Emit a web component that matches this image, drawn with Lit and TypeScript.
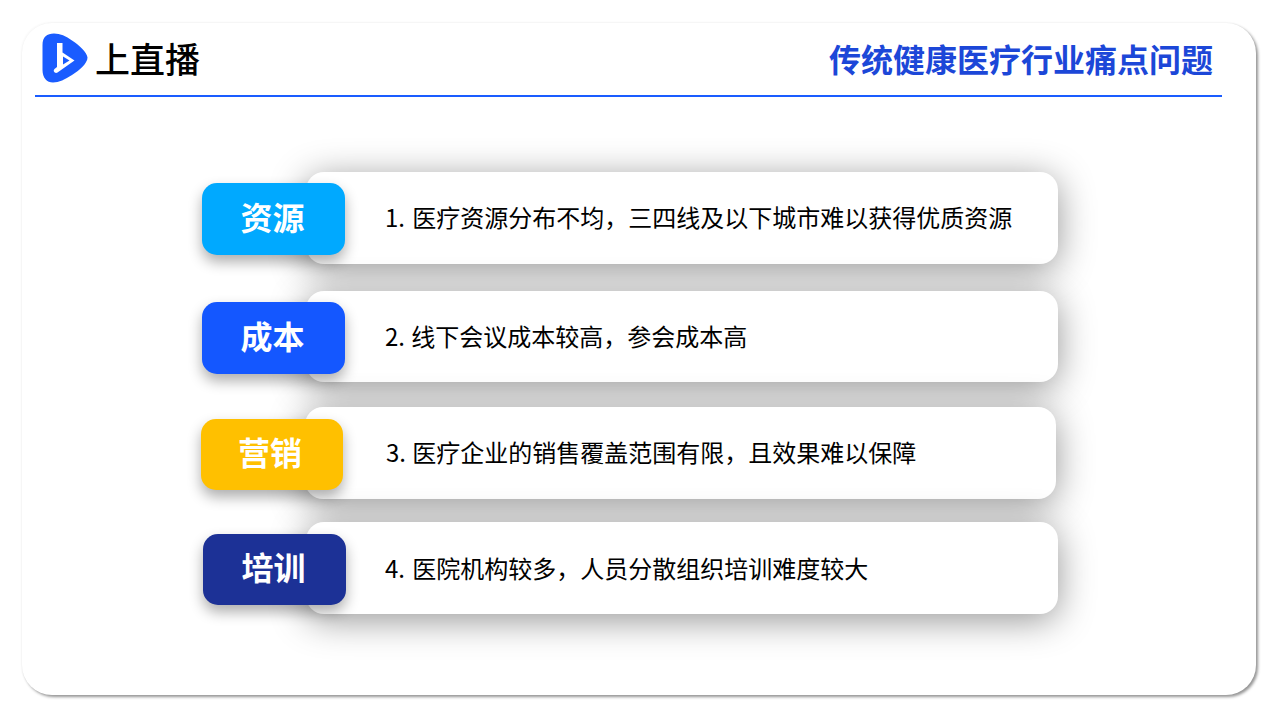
import { LitElement, html, css } from "lit";
import { customElement } from "lit/decorators.js";

const rows = [
  { tag: "资源", cls: "c1", text: "1. 医疗资源分布不均，三四线及以下城市难以获得优质资源" },
  { tag: "成本", cls: "c2", text: "2. 线下会议成本较高，参会成本高" },
  { tag: "营销", cls: "c3", text: "3. 医疗企业的销售覆盖范围有限，且效果难以保障" },
  { tag: "培训", cls: "c4", text: "4. 医院机构较多，人员分散组织培训难度较大" },
];

@customElement("app-root")
export class AppRoot extends LitElement {
  static styles = css`
    :host {
      display: block;
      width: 1278px;
      height: 720px;
      overflow: hidden;
      background: #fff;
      font-family: "Noto Sans CJK SC", "Noto Sans", sans-serif;
      padding: 23px 0 0 22px;
      box-sizing: border-box;
    }
    .slide {
      width: 1234px;
      height: 672px;
      box-sizing: border-box;
      background: #fff;
      border-radius: 30px;
      box-shadow: 2px 2px 3px rgba(0, 0, 0, 0.42), -1px -1px 2px rgba(0, 0, 0, 0.03);
      padding: 10px 34px 0 13px;
    }
    .header {
      display: flex;
      align-items: center;
      justify-content: space-between;
      height: 64px;
      padding: 0 9px 12px 7px;
      box-sizing: border-box;
      border-bottom: 2px solid #1a5cff;
    }
    .brand {
      display: flex;
      align-items: center;
      gap: 7px;
    }
    .brand svg {
      display: block;
    }
    .brand span {
      font-size: 35px;
      font-weight: 500;
      color: #000;
      line-height: 50px;
    }
    h1 {
      margin: 0;
      font-size: 32px;
      font-weight: 700;
      line-height: 50px;
      color: #1c47d8;
    }
    .list {
      display: flex;
      flex-direction: column;
      padding: 75px 0 0 167px;
    }
    .row {
      display: flex;
      align-items: flex-start;
      height: 92px;
      margin-bottom: 27px;
    }
    .row.c2 { height: 91px; margin-bottom: 25px; }
    .row.c3 { margin-bottom: 23px; margin-left: -1px; }
    .row.c4 { margin-left: 1px; }
    .tag {
      position: relative;
      z-index: 1;
      flex: none;
      width: 143px;
      height: 72px;
      margin-top: 11px;
      padding: 0 2px 7px 0;
      box-sizing: border-box;
      border-radius: 15px;
      display: flex;
      align-items: center;
      justify-content: center;
      color: #fff;
      font-size: 32px;
      font-weight: 700;
      box-shadow: 0 7px 14px rgba(0, 0, 0, 0.32);
    }
    .c1 .tag { background: #00a9ff; }
    .c2 .tag { background: #1457ff; }
    .c3 .tag { background: #ffc000; width: 142px; height: 71px; margin-top: 12px; padding-right: 4px; }
    .c4 .tag { background: #1c3196; height: 71px; margin-top: 12px; }
    .card {
      flex: none;
      width: 752px;
      height: 100%;
      margin-left: -39px;
      box-sizing: border-box;
      padding: 0 0 4px 79px;
      display: flex;
      align-items: center;
      background: #fff;
      border-radius: 18px;
      box-shadow: 0 6px 36px rgba(0, 0, 0, 0.42);
      font-size: 24px;
      color: #000;
      white-space: pre;
      word-spacing: 2px;
    }
    .c2 .card { padding-bottom: 2px; word-spacing: 1px; }
    .c3 .card { margin-left: -38px; width: 751px; padding-left: 81px; word-spacing: 1px; }
    .c4 .card { margin-left: -40px; padding-bottom: 2px; }
  `;

  render() {
    return html`
      <div class="slide">
        <header class="header">
          <div class="brand">
            <svg width="46" height="50" viewBox="0 0 46 50" aria-hidden="true">
              <path fill="#1a5cff" d="M.5 12C.5 4 5 .5 12 .5C18 .5 24 3 30 7.500C37 12 45 19 45.500 24.500C45.500 30 38 37 30 42C23 46.500 17 49.500 11 49.500C5 49.500 .5 45 .5 37Z"/>
              <path fill="#fff" fill-rule="evenodd" d="M15 10H20.500V19.500L32.500 27.500L15.500 39.500C13 41 10.500 38 12.500 36L15 34ZM21 23.500V31.500L27.500 27.500Z"/>
            </svg>
            <span>上直播</span>
          </div>
          <h1>传统健康医疗行业痛点问题</h1>
        </header>
        <div class="list">
          ${rows.map(
            (r) => html`
              <div class="row ${r.cls}">
                <div class="tag">${r.tag}</div>
                <div class="card">${r.text}</div>
              </div>
            `
          )}
        </div>
      </div>
    `;
  }
}
